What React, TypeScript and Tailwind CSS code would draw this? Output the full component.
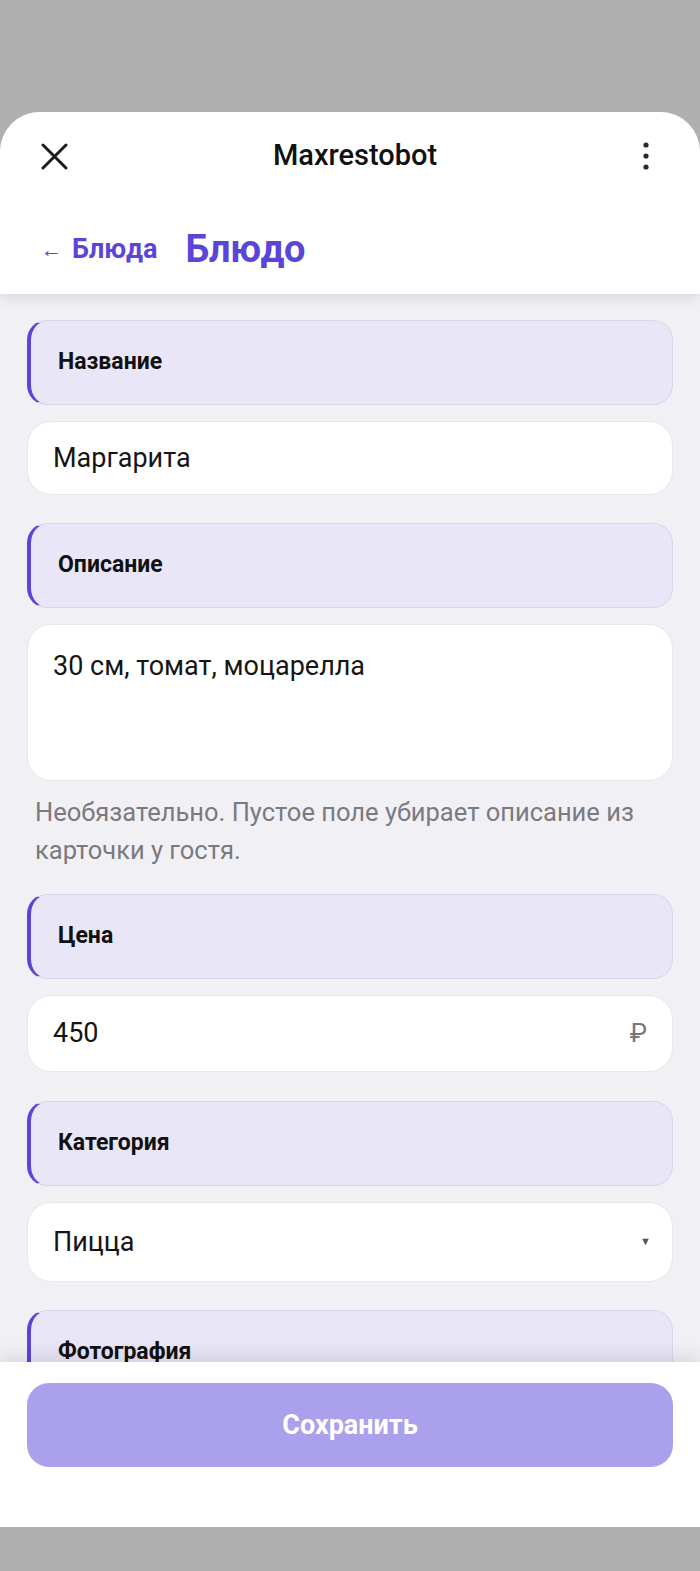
const SectionLabel = ({ children }: { children: string }) => (
  <div className="flex h-[85px] shrink-0 items-center rounded-[20px] border border-[#d9d6ec] border-l-4 border-l-[#5b45d9] bg-[#e9e6f8] pl-[27px] text-[23px] font-bold text-[#111]">
    {children}
  </div>
);

const Field = ({ children, className = '' }: { children: React.ReactNode; className?: string }) => (
  <div
    className={`mt-4 flex shrink-0 rounded-[24px] border border-[#e6e6ec] bg-white px-[25px] text-[27px] text-[#151515] ${className}`}
  >
    {children}
  </div>
);

export default function App() {
  return (
    <div
      className="flex h-[1571px] w-[700px] flex-col overflow-hidden bg-[#b0b0b0]"
      style={{ fontFamily: 'Roboto, "Noto Sans", sans-serif' }}
    >
      <div className="h-[112px] shrink-0" />

      <div className="flex h-[1415px] shrink-0 flex-col overflow-hidden rounded-t-[40px] bg-[#f1f1f5]">
        {/* header */}
        <div className="relative z-10 shrink-0 bg-white shadow-[0_4px_12px_rgba(0,0,0,0.10)]">
          <div className="flex h-[88px] items-center justify-between pl-[41px] pr-[50px]">
            <svg width="27" height="27" viewBox="0 0 27 27" className="mt-[1px]">
              <path d="M2 2 L25 25 M25 2 L2 25" stroke="#1c1c1c" strokeWidth="3" strokeLinecap="round" />
            </svg>
            <div className="text-[29px] font-medium text-[#111]">Maxrestobot</div>
            <svg width="8" height="28" viewBox="0 0 8 28">
              <circle cx="4" cy="3" r="2.6" fill="#2a2a2a" />
              <circle cx="4" cy="14" r="2.6" fill="#2a2a2a" />
              <circle cx="4" cy="25" r="2.6" fill="#2a2a2a" />
            </svg>
          </div>
          <div className="flex h-[94px] items-center gap-[28px] pl-[41px] pt-[4px]">
            <div className="flex items-center gap-[10px] text-[27px] font-bold text-[#5b45d9]">
              <span className="mt-[4px] text-[21px] font-normal">←</span>
              <span>Блюда</span>
            </div>
            <div className="text-[38px] font-bold tracking-[-0.3px] text-[#5b45d9]">Блюдо</div>
          </div>
        </div>

        {/* scrolling content */}
        <div className="flex min-h-0 flex-1 flex-col overflow-hidden px-[27px] pt-[26px]">
          <SectionLabel>Название</SectionLabel>
          <Field className="h-[74px] items-center">Маргарита</Field>

          <div className="mt-[28px] shrink-0">
            <SectionLabel>Описание</SectionLabel>
          </div>
          <Field className="h-[157px] items-start pt-[21px]">30 см, томат, моцарелла</Field>
          <p className="mt-[12px] shrink-0 px-[8px] text-[25.5px] leading-[38px] text-[#7a7a80]">
            Необязательно. Пустое поле убирает описание из карточки у гостя.
          </p>

          <div className="mt-[25px] shrink-0">
            <SectionLabel>Цена</SectionLabel>
          </div>
          <Field className="h-[77px] items-center justify-between">
            <span>450</span>
            <span className="text-[26px] text-[#777]">₽</span>
          </Field>

          <div className="mt-[29px] shrink-0">
            <SectionLabel>Категория</SectionLabel>
          </div>
          <Field className="h-[80px] items-center justify-between">
            <span>Пицца</span>
            <span className="mr-[-4px] text-[11px] text-[#555]">▼</span>
          </Field>

          <div className="mt-[28px] shrink-0">
            <SectionLabel>Фотография</SectionLabel>
          </div>
        </div>

        {/* bottom bar */}
        <div className="relative z-10 h-[165px] shrink-0 bg-white px-[27px] pt-[21px] shadow-[0_-6px_18px_rgba(0,0,0,0.10)]">
          <button
            type="button"
            className="flex h-[84px] w-full items-center justify-center rounded-[22px] bg-[#aba0ec] text-[27px] font-bold text-white"
          >
            Сохранить
          </button>
        </div>
      </div>
    </div>
  );
}
